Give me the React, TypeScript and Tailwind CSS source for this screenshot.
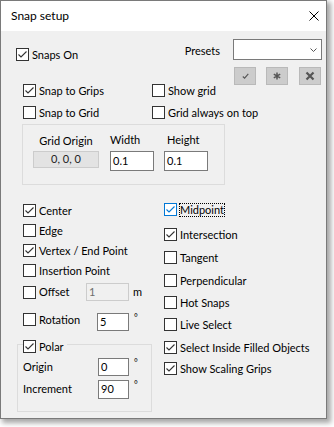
import React from 'react';

interface CheckProps {
  label: string;
  checked?: boolean;
  focused?: boolean;
  className?: string;
}

// Windows 10 style checkbox with label
const Check: React.FC<CheckProps> = ({ label, checked = false, focused = false, className = '' }) => (
  <div className={`flex items-center h-[13px] ${className}`}>
    <span
      className={`relative w-[13px] h-[13px] shrink-0 bg-white border ${
        focused ? 'border-[#0078d7]' : 'border-[#333333]'
      }`}
    >
      {checked && (
        <svg className="absolute left-0 top-0" width="11" height="11" viewBox="0 0 11 11">
          <path
            d="M1.5 5.5 L4 8 L9.5 2.5"
            fill="none"
            stroke={focused ? '#0078d7' : '#333333'}
            strokeWidth="1.1"
          />
        </svg>
      )}
    </span>
    <span
      className={`ml-[2px] px-[1px] h-[14px] leading-[14px] whitespace-nowrap ${
        focused ? 'outline outline-dotted outline-black -outline-offset-1' : ''
      }`}
    >
      {label}
    </span>
  </div>
);

interface BoxProps {
  value: string;
  className?: string;
  disabled?: boolean;
}

const TextBox: React.FC<BoxProps> = ({ value, className = '', disabled = false }) => (
  <div
    className={`flex items-center pl-[2px] border ${
      disabled ? 'bg-[#f0f0f0] border-[#cccccc] text-[#6d6d6d]' : 'bg-white border-[#7a7a7a]'
    } ${className}`}
  >
    {value}
  </div>
);

const ToolButton: React.FC<{ children: React.ReactNode; className?: string }> = ({ children, className = '' }) => (
  <div
    className={`w-[22px] h-[18px] bg-[#cccccc] border border-[#b9b9b9] flex items-center justify-center ${className}`}
  >
    {children}
  </div>
);

const Degree: React.FC<{ className?: string }> = ({ className = '' }) => (
  <span className={`self-start ml-[4px] text-[9px] leading-none ${className}`}>°</span>
);

export default function App() {
  return (
    <div className="w-[334px] h-[427px] bg-white font-['Lato',sans-serif] text-[11px] text-black">
      <div className="w-[327px] h-[419px] flex flex-col border border-[#7a7a7a] shadow-[3px_3px_5px_1px_rgba(0,0,0,0.35)]">
        {/* Title bar */}
        <div className="h-[30px] shrink-0 bg-white flex items-center pl-[10px] pr-[7px]">
          <span className="leading-none text-[12px]">Snap setup</span>
          <svg className="ml-auto" width="10" height="10" viewBox="0 0 10 10">
            <path d="M0.5 0.5 L9.5 9.5 M9.5 0.5 L0.5 9.5" stroke="#000" strokeWidth="1" />
          </svg>
        </div>

        {/* Body */}
        <div className="flex-1 bg-[#f0f0f0] pt-[8px]">
          {/* Snaps on + presets */}
          <div className="flex items-start pl-[15px] pr-[4px]">
            <Check label="Snaps On" checked className="mt-[9px]" />
            <span className="ml-auto mt-[5px] mr-[13px] leading-[14px]">Presets</span>
            <div className="w-[89px] h-[21px] bg-white border border-[#7a7a7a] flex items-center justify-end pr-[4px]">
              <svg width="7" height="4" viewBox="0 0 7 4">
                <path d="M0.5 0.5 L3.5 3.5 L6.5 0.5" stroke="#555" fill="none" />
              </svg>
            </div>
          </div>

          <div className="flex justify-end gap-[10px] mt-[6px] pr-[5px]">
            <ToolButton>
              <svg width="7" height="6" viewBox="0 0 7 6">
                <path d="M0.8 3.5 L2.6 5.2 L6.3 0.8" stroke="#555" strokeWidth="1.1" fill="none" />
              </svg>
            </ToolButton>
            <ToolButton>
              <svg width="8" height="8" viewBox="0 0 8 8">
                <path d="M4 0.5 V7.5 M0.8 2.2 L7.2 5.8 M7.2 2.2 L0.8 5.8" stroke="#555" strokeWidth="1.5" />
              </svg>
            </ToolButton>
            <ToolButton className="ml-[1px]">
              <svg width="10" height="10" viewBox="0 0 10 10">
                <path d="M1.5 1.5 L8.5 8.5 M8.5 1.5 L1.5 8.5" stroke="#555" strokeWidth="2.2" />
              </svg>
            </ToolButton>
          </div>

          {/* Grid options */}
          <div className="mt-[-1px] pl-[22px] flex flex-col gap-[9px]">
            <div className="flex">
              <Check className="w-[129px]" label="Snap to Grips" checked />
              <Check label="Show grid" />
            </div>
            <div className="flex">
              <Check className="w-[129px]" label="Snap to Grid" />
              <Check label="Grid always on top" />
            </div>
          </div>

          <div className="ml-[21px] mt-[5px] w-[203px] h-[61px] border border-[#dcdcdc] pl-[10px] pt-[8px] flex">
            <div className="w-[66px] flex flex-col">
              <span className="h-[15px] leading-[15px] text-center">Grid Origin</span>
              <div className="mt-[3px] h-[17px] bg-[#e3e3e3] border border-[#cccccc] flex items-center justify-center text-[#222]">
                0, 0, 0
              </div>
            </div>
            <div className="ml-[11px] w-[44px] flex flex-col">
              <span className="h-[15px] leading-[13px]">Width</span>
              <TextBox value="0.1" className="mt-[3px] h-[20px]" />
            </div>
            <div className="ml-[10px] w-[44px] flex flex-col">
              <span className="h-[15px] leading-[13px] pl-[3px]">Height</span>
              <TextBox value="0.1" className="mt-[3px] h-[20px]" />
            </div>
          </div>

          {/* Snap modes */}
          <div className="flex">
            <div className="ml-[16px] w-[147px] flex flex-col">
              <div className="pl-[6px] flex flex-col">
                <Check label="Center" checked className="mt-[19px]" />
                <Check label="Edge" className="mt-[7px]" />
                <Check label="Vertex / End Point" checked className="mt-[7px]" />
                <Check label="Insertion Point" className="mt-[7px]" />
                <div className="mt-[6px] h-[18px] flex items-center">
                  <Check label="Offset" className="w-[63px]" />
                  <TextBox value="1" disabled className="w-[43px] h-[18px]" />
                  <span className="ml-[4px]">m</span>
                </div>
                <div className="mt-[12px] h-[18px] flex items-start">
                  <Check label="Rotation" className="w-[74px]" />
                  <TextBox value="5" className="w-[32px] h-[18px]" />
                  <Degree className="ml-[5px]" />
                </div>
              </div>

              <fieldset className="mt-[5px] w-[135px] border border-[#dcdcdc] pl-[5px] pb-[12px]">
                <legend className="pt-[4px] pr-[2px]">
                  <Check label="Polar" checked />
                </legend>
                <div className="mt-[5px] h-[18px] flex items-center">
                  <span className="w-[75px]">Origin</span>
                  <TextBox value="0" className="w-[31px] h-[18px]" />
                  <Degree className="ml-[5px]" />
                </div>
                <div className="mt-[4px] h-[19px] flex items-center">
                  <span className="w-[75px]">Increment</span>
                  <TextBox value="90" className="w-[31px] h-[19px]" />
                  <Degree className="ml-[5px]" />
                </div>
              </fieldset>
            </div>

            <div className="flex flex-col">
              <Check label="Midpoint" checked focused className="mt-[18px]" />
              <Check label="Intersection" checked className="mt-[12px]" />
              <Check label="Tangent" className="mt-[10px]" />
              <Check label="Perpendicular" className="mt-[10px]" />
              <Check label="Hot Snaps" className="mt-[9px]" />
              <Check label="Live Select" className="mt-[9px]" />
              <Check label="Select Inside Filled Objects" checked className="mt-[10px]" />
              <Check label="Show Scaling Grips" checked className="mt-[8px]" />
            </div>
          </div>
        </div>
      </div>
    </div>
  );
}
